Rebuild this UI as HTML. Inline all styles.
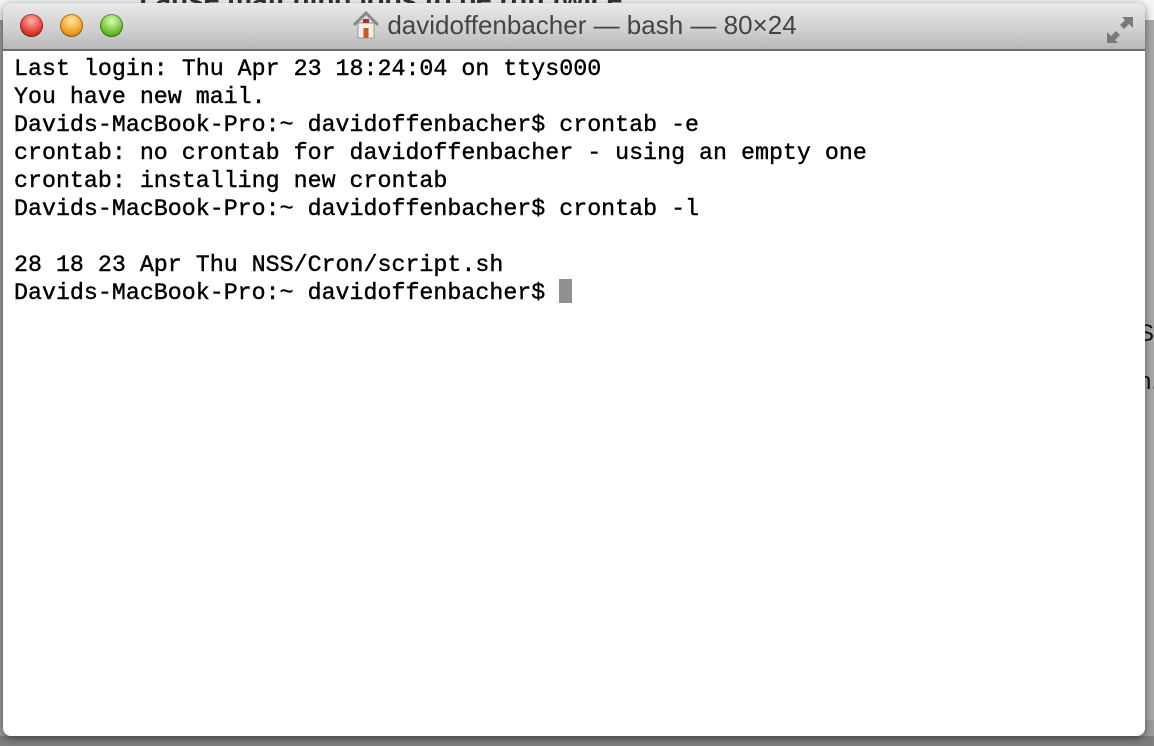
<!DOCTYPE html>
<html><head><style>
html,body{margin:0;padding:0;width:1154px;height:746px;overflow:hidden;background:#9c9c9c;position:relative;font-family:"Liberation Sans",sans-serif}
.bgtop{position:absolute;left:0;top:0;width:1154px;height:20px;background:#f4f4f4}
.bgtop span{position:absolute;left:140px;top:-16px;font-size:28px;color:#333;font-weight:bold}
.bgr{position:absolute;left:1120px;top:20px;width:34px;height:700px;background:#a8a8a8}
.bgr span{position:absolute;left:18px;font-size:24px;color:#111}
.bgbot{position:absolute;left:0;top:736px;width:1154px;height:10px;background:#7d7d7d}
.win{position:absolute;left:3px;top:3px;width:1142px;height:733px;border-radius:8px;background:#fff;overflow:hidden;box-shadow:0 2px 8px rgba(0,0,0,.5)}
.tb{position:absolute;left:0;top:0;width:100%;height:46px;background:linear-gradient(#e9e9e9,#cfcfcf 60%,#b8b8b8);border-bottom:2px solid #6f6f6f}
.btn{position:absolute;top:11px;width:23px;height:23px;border-radius:50%;box-shadow:inset 0 0 0 1px rgba(0,0,0,.35)}
.title{position:absolute;left:0;right:0;top:7px;text-align:center;font-size:26px;color:#444}
.term{position:absolute;left:11px;top:52px;font-family:"Liberation Mono",monospace;font-size:23.3px;line-height:28px;color:#000;white-space:pre;-webkit-text-stroke:0.4px #000}
.cur{display:inline-block;width:13px;height:24px;background:#909090;vertical-align:-4px}
</style></head><body>
<div class="bgtop"><span>cause matching jobs to be run twice</span></div>
<div class="bgr"><span style="top:300px">Se</span><span style="top:348px">n.</span></div>
<div class="bgbot"></div>
<div class="win">
<div class="tb">
<div class="btn" style="left:17px;background:radial-gradient(circle at 50% 30%,#ffb0a8,#e23a30 60%,#9c1a12)"></div>
<div class="btn" style="left:57px;background:radial-gradient(circle at 50% 30%,#ffe6a0,#f0a020 60%,#a06010)"></div>
<div class="btn" style="left:97px;background:radial-gradient(circle at 50% 30%,#d8ffb0,#6cc030 60%,#3a7a18)"></div>
<div class="title"><svg width="30" height="30" viewBox="0 0 30 30" style="vertical-align:-6px;margin-right:6px"><path d="M3 15 L15 3 L27 15" fill="none" stroke="#888" stroke-width="3"/><rect x="7" y="13" width="16" height="15" fill="#f4efe6" stroke="#999"/><rect x="12.5" y="18" width="5" height="10" fill="#c85a20"/><rect x="12" y="9" width="6" height="4" fill="#a33"/></svg>davidoffenbacher — bash — 80×24</div>
<svg style="position:absolute;right:10px;top:12px" width="30" height="30" viewBox="0 0 30 30" fill="#7a7a7a"><path d="M17 2h11v11l-4-4-5 5-4-4 5-5z"/><path d="M13 28H2V17l4 4 5-5 4 4-5 5z"/></svg>
</div>
<div class="term">Last login: Thu Apr 23 18:24:04 on ttys000
You have new mail.
Davids-MacBook-Pro:~ davidoffenbacher$ crontab -e
crontab: no crontab for davidoffenbacher - using an empty one
crontab: installing new crontab
Davids-MacBook-Pro:~ davidoffenbacher$ crontab -l

28 18 23 Apr Thu NSS/Cron/script.sh
Davids-MacBook-Pro:~ davidoffenbacher$ <span class="cur"></span></div>
</div>
</body></html>
